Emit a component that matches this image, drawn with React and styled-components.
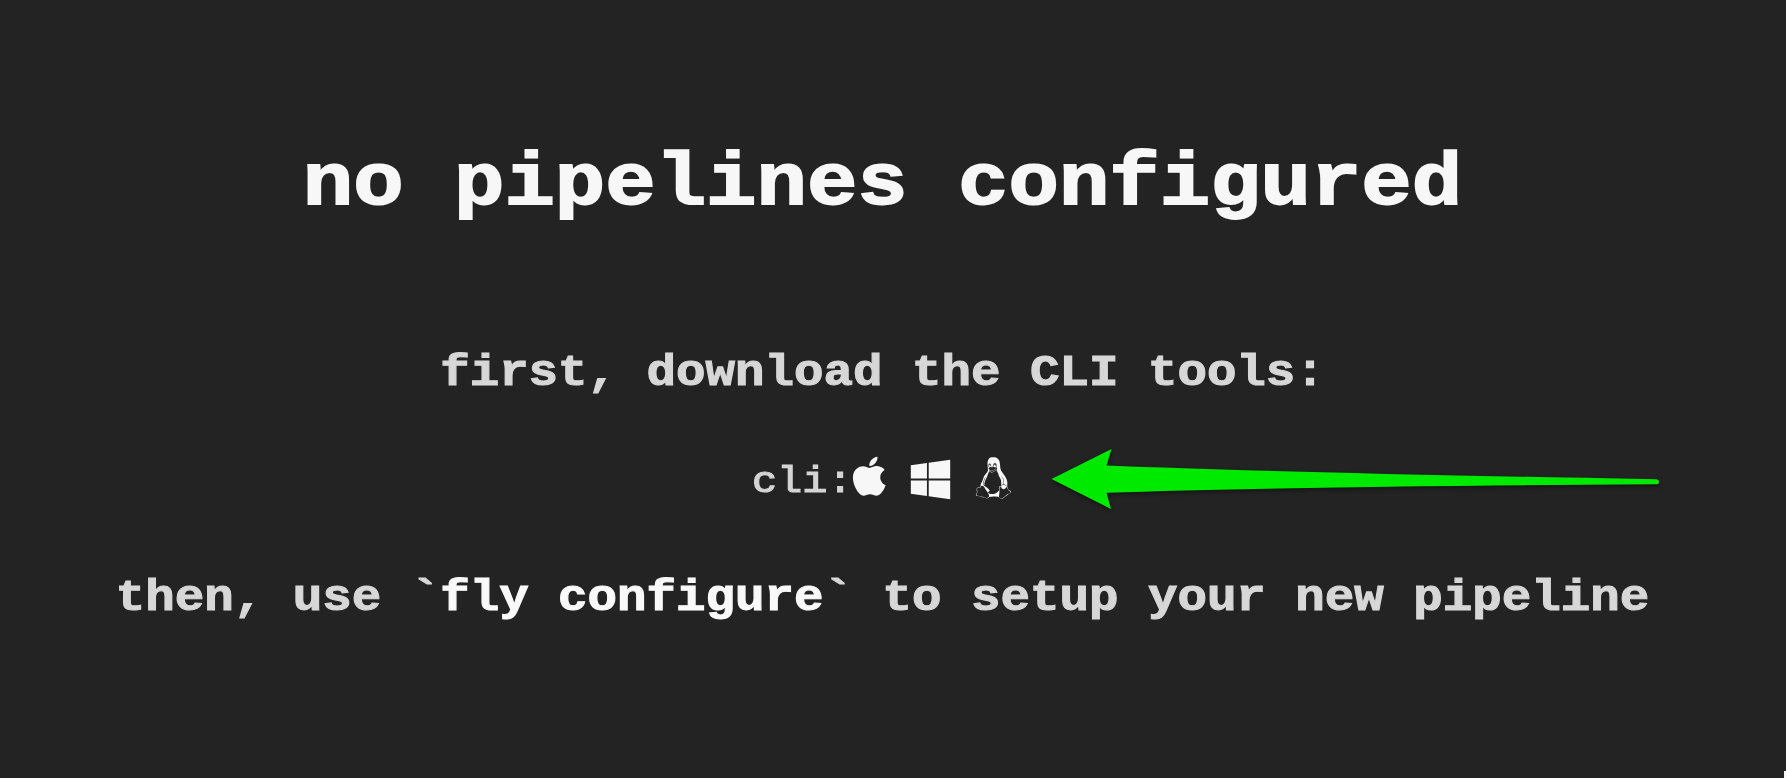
import React from "react";
import styled, { createGlobalStyle } from "styled-components";
import { FaApple, FaWindows } from "react-icons/fa";
import { DiLinux } from "react-icons/di";

const Global = createGlobalStyle`
  body { margin: 0; background: #232323; font-family: "Liberation Mono", "Courier New", monospace; }
`;
const Page = styled.main`
  position: relative;
  box-sizing: border-box;
  width: 1786px;
  height: 778px;
  overflow: hidden;
  display: flex;
  flex-direction: column;
  align-items: center;
  padding: 134px 21px 0 0;
`;
const Title = styled.h1`
  margin: 0;
  font-size: 84px;
  line-height: 96px;
  color: #f7f7f7;
  white-space: pre;
  transform: scaleY(0.88);
  transform-origin: 50% 73px;
  -webkit-text-stroke: 2px;
`;
const Step = styled.h2`
  margin: ${(p) => p.$top}px 0 0;
  font-size: 49.15px;
  line-height: 56px;
  color: #d7d7d7;
  white-space: pre;
  transform: scaleY(0.89);
  transform-origin: 50% 42px;
  -webkit-text-stroke: 1.2px;
`;
const Command = styled.span`
  color: #f9f9f9;
`;
const Cli = styled.div`
  display: flex;
  align-items: flex-start;
  margin-top: 49px;
  padding-left: 2px;
  height: 60px;
`;
const Label = styled.span`
  font-size: 42px;
  line-height: 60px;
  margin-top: 2px;
  color: #d4d4d4;
  transform: scaleY(0.9);
  transform-origin: 50% 42px;
  -webkit-text-stroke: 1.3px;
`;
const Download = styled.a`
  display: flex;
  color: #f7f7f7;
  font-size: ${(p) => p.$size}px;
  margin: ${(p) => p.$top}px 0 0 ${(p) => p.$left}px;
`;
const Arrow = styled.svg`
  position: absolute;
  left: 1040px;
  top: 440px;
  filter: drop-shadow(0 2px 2px rgba(0, 0, 0, 0.45));
`;
const CornerMark = styled.span`
  position: absolute;
  right: 0;
  bottom: 0;
  width: 2px;
  height: 7px;
  background: #f7f7f7;
`;

export default function App() {
  return (
    <>
      <Global />
      <Page>
        <Title>no pipelines configured</Title>
        <Step $top={114}>first, download the CLI tools:</Step>
        <Cli>
          <Label>cli:</Label>
          <Download $size={44.5} $top={5} $left={-5.5} aria-label="macOS"><FaApple /></Download>
          <Download $size={45} $top={7.5} $left={16.6} aria-label="Windows"><FaWindows /></Download>
          <Download $size={43} $top={7} $left={18.8} aria-label="Linux"><DiLinux /></Download>
        </Cli>
        <Step $top={60}>then, use `<Command>fly configure</Command>` to setup your new pipeline</Step>
        <Arrow width="640" height="80" viewBox="1040 440 640 80">
          <path
            fill="#00ea00"
            d="M1051.500 479 L1111.500 449 L1106.500 465.500 Q1280 472.500 1656.500 479.200 Q1659 479.500 1659 481.800 Q1659 484.300 1656.500 484.300 Q1280 486.500 1106.500 492.800 L1111 509 Z"
          />
        </Arrow>
        <CornerMark />
      </Page>
    </>
  );
}
